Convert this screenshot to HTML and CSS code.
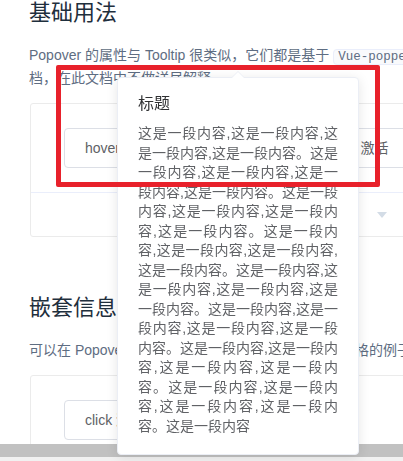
FILE: index.html
```html
<!DOCTYPE html>
<html lang="zh-CN">
<head>
<meta charset="utf-8">
<title>Popover</title>
<link rel="stylesheet" href="styles.css">
</head>
<body>
<main class="doc">
  <h3 class="doc-title">基础用法</h3>
  <p class="doc-desc"><span class="line">Popover 的属性与 Tooltip 很类似，它们都是基于 <code>Vue-popper</code> 开发的，因此对于重复属性，请参考 Tooltip 的文</span><br><span class="line">档，在此文档中不做详尽解释。</span></p>
  <div class="demo">
    <div class="source">
      <button class="btn">hover 激活</button>
      <button class="btn">click 激活</button>
      <button class="btn">focus 激活</button>
      <button class="btn">手动激活</button>
    </div>
    <div class="control">
      <svg class="caret" width="10" height="6" viewBox="0 0 10 6"><path d="M0 0 H10 L5 6 Z" fill="#d3dce6"/></svg>
    </div>
  </div>

  <h3 class="doc-title">嵌套信息</h3>
  <p class="doc-desc"><span class="line">可以在 Popover 中嵌套多种类型信息，以下为嵌套表格的例子。</span></p>
  <div class="demo">
    <div class="source">
      <button class="btn">click 激活</button>
    </div>
    <div class="control"></div>
  </div>
</main>

<div class="scrollbar"><div class="thumb"></div></div>

<div class="popover">
  <div class="popover-title">标题</div>
  <div class="popover-body">这是一段内容,这是一段内容,这是一段内容,这是一段内容。这是一段内容,这是一段内容,这是一段内容,这是一段内容。这是一段内容,这是一段内容,这是一段内容,这是一段内容。这是一段内容,这是一段内容,这是一段内容,这是一段内容。这是一段内容,这是一段内容,这是一段内容,这是一段内容。这是一段内容,这是一段内容,这是一段内容,这是一段内容。这是一段内容,这是一段内容,这是一段内容,这是一段内容。这是一段内容,这是一段内容,这是一段内容,这是一段内容。这是一段内容</div>
</div>

<div class="annot"></div>
</body>
</html>
```

FILE: styles.css
```css
html, body {
  margin: 0;
  padding: 0;
  overflow: hidden;
  background: #fff;
}
body {
  font-family: "Liberation Sans", "Noto Sans CJK SC", sans-serif;
  width: 403px;
  height: 461px;
  position: relative;
}
.doc {
  padding-left: 29px;
  width: 760px;
}
.doc-title {
  margin: 58px 0 20px;
  font-size: 22px;
  line-height: 25px;
  font-weight: 400;
  color: #1f2f3d;
}
.doc-title:first-child {
  margin-top: 0;
}
.doc-desc {
  margin: 0 0 14px;
  font-size: 14px;
  line-height: 21px;
  color: #5e6d82;
}
.line {
  white-space: nowrap;
}
code {
  font-family: "Liberation Mono", monospace;
  font-size: 12.5px;
  background: #f9fafc;
  border: 1px solid #eaeefb;
  border-radius: 4px;
  padding: 0 4px;
  color: #5e6d82;
}
.demo {
  width: 702px;
  margin-left: 1px;
  border: 1px solid #ebebeb;
  border-radius: 3px;
}
.source {
  display: flex;
  gap: 14px;
  padding: 24px 24px 24px 33px;
}
.btn {
  font-family: "Liberation Sans", "Noto Sans CJK SC", sans-serif;
  font-size: 14px;
  line-height: 14px;
  padding: 12px 20px;
  border: 1px solid #dcdfe6;
  border-radius: 4px;
  background: #fff;
  color: #606266;
  white-space: nowrap;
}
.control {
  height: 43px;
  border-top: 1px solid #eaeefb;
  display: flex;
  align-items: center;
  justify-content: center;
}
.caret {
  display: block;
}
.scrollbar {
  position: fixed;
  left: 0;
  right: 0;
  bottom: 0;
  height: 17px;
  background: #f1f1f1;
  z-index: 5;
}
.thumb {
  height: 13px;
  background: #c1c1c1;
}
.popover {
  position: absolute;
  left: 117px;
  top: 77px;
  width: 200px;
  padding: 18px 20px;
  background: #fff;
  border: 1px solid #ebeef5;
  border-radius: 4px;
  box-shadow: 0 2px 12px 0 rgba(0, 0, 0, 0.1);
  z-index: 10;
}
.popover::before,
.popover::after {
  content: "";
  position: absolute;
  width: 0;
  height: 0;
  border-style: solid;
  border-color: transparent;
}
.popover::before {
  left: 113px;
  top: -7px;
  border-width: 0 7px 7px;
  border-bottom-color: #ebeef5;
}
.popover::after {
  left: 114px;
  top: -6px;
  border-width: 0 6px 6px;
  border-bottom-color: #fff;
}
.popover-title {
  font-size: 16px;
  line-height: 16px;
  color: #303133;
  margin-bottom: 12px;
}
.popover-body {
  font-size: 14px;
  line-height: 19.5px;
  color: #606266;
  text-align: justify;
  word-break: break-all;
}
.annot {
  position: absolute;
  left: 56px;
  top: 65px;
  width: 314px;
  height: 112px;
  border: 5px solid #e8212b;
  border-radius: 2px;
  z-index: 20;
}
```
